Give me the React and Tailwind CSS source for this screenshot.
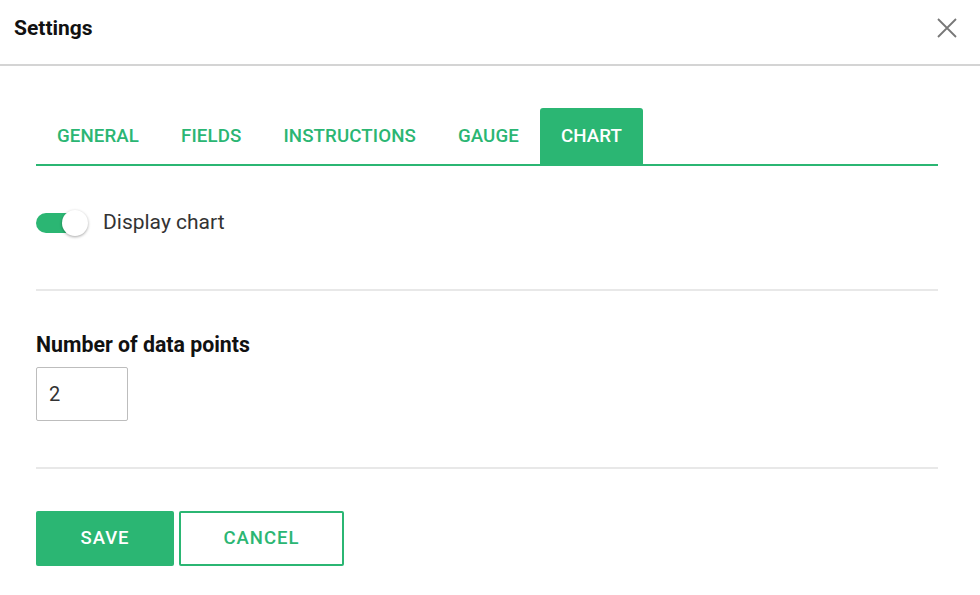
const TABS = ['GENERAL', 'FIELDS', 'INSTRUCTIONS', 'GAUGE', 'CHART']

export default function App() {
    const active = 'CHART'
    return (
        <div className="w-[980px] h-[595px] bg-white overflow-hidden" style={{ fontFamily: 'Roboto, "Liberation Sans", sans-serif' }}>
            {/* header */}
            <div className="h-[66px] flex items-center justify-between pl-[14px] pr-[23px] pb-[9px] border-b-2 border-[#d4d4d4]">
                <span className="text-[21px] font-bold text-[#111] leading-[24px]">Settings</span>
                <svg width="20" height="20" viewBox="0 0 20 20" className="text-[#777]">
                    <path d="M1 1L19 19M19 1L1 19" stroke="currentColor" strokeWidth="1.8" fill="none" />
                </svg>
            </div>

            <div className="ml-[36px] w-[902px]">
                {/* tabs */}
                <div className="mt-[42px] flex border-b-2 border-[#2bb673]">
                    {TABS.map(t => (
                        <div
                            key={t}
                            className={`h-[56px] px-[21px] flex items-center text-[18.7px] font-medium tracking-[0.1px] rounded-t-[3px] ${t === active ? 'bg-[#2bb673] text-white' : 'text-[#2bb673]'}`}
                        >
                            {t}
                        </div>
                    ))}
                </div>

                {/* toggle */}
                <div className="flex items-center h-[56px] mt-[29px] gap-[15px]">
                    <div className="relative w-[52px] h-[26px] flex items-center">
                        <div className="w-[50px] h-[20px] rounded-full bg-[#2bb673]" />
                        <div className="absolute right-0 top-0 w-[26px] h-[26px] rounded-full bg-white shadow-[0_1px_3px_rgba(0,0,0,0.35)]" />
                    </div>
                    <span className="text-[21px] text-[#333]">Display chart</span>
                </div>

                <div className="mt-[38px] h-[2px] bg-[#e8e8e8]" />

                {/* data points */}
                <div className="mt-[42px] text-[21.3px] leading-[24px] font-bold text-[#111]">Number of data points</div>
                <div className="mt-[10px] w-[92px] h-[54px] border border-[#bdbdbd] rounded-[2px] flex items-center pl-[12px] text-[20px] text-[#333]">2</div>

                <div className="mt-[46px] h-[2px] bg-[#e8e8e8]" />

                {/* actions */}
                <div className="mt-[42px] flex gap-[5px]">
                    <button className="w-[138px] h-[55px] bg-[#2bb673] text-white text-[18.5px] font-medium tracking-[1px] rounded-[2px]">SAVE</button>
                    <button className="w-[165px] h-[55px] bg-white border-2 border-[#2bb673] text-[#2bb673] text-[18.5px] font-medium tracking-[1px] rounded-[2px]">CANCEL</button>
                </div>
            </div>
        </div>
    )
}
